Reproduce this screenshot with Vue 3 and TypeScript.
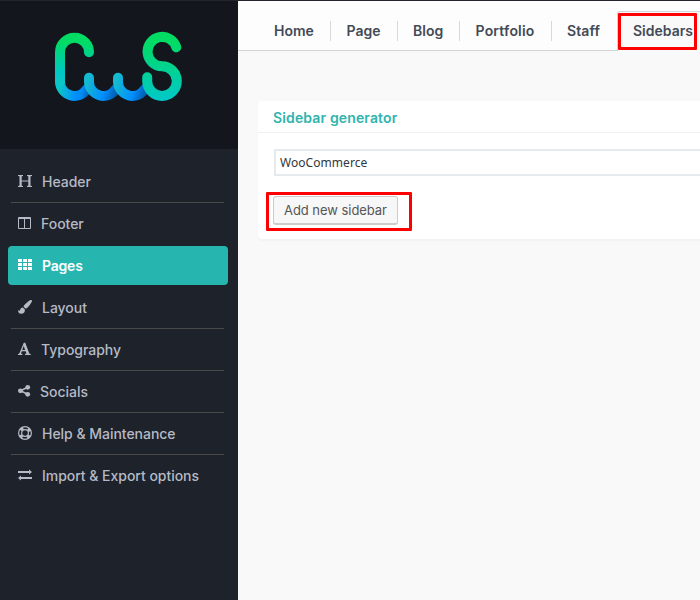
<script setup lang="ts">
interface MenuItem {
  id: string
  label: string
  active?: boolean
}

const menu: MenuItem[] = [
  { id: 'header', label: 'Header' },
  { id: 'footer', label: 'Footer' },
  { id: 'pages', label: 'Pages', active: true },
  { id: 'layout', label: 'Layout' },
  { id: 'typography', label: 'Typography' },
  { id: 'socials', label: 'Socials' },
  { id: 'help', label: 'Help & Maintenance' },
  { id: 'import', label: 'Import & Export options' },
]

const tabs: string[] = ['Home', 'Page', 'Blog', 'Portfolio', 'Staff', 'Sidebars']
const sidebarName: string = 'WooCommerce'
</script>

<template>
  <div class="screen">
    <aside class="side">
      <div class="brand">
        <svg class="logo" width="130" height="72" viewBox="54 31 130 72" fill="none" stroke-width="10" stroke-linecap="round">
          <defs>
            <linearGradient id="cBody" gradientUnits="userSpaceOnUse" x1="70" y1="42" x2="70" y2="82">
              <stop offset="0" stop-color="#00dc64" />
              <stop offset=".75" stop-color="#00c8c3" />
              <stop offset="1" stop-color="#0bc6c6" />
            </linearGradient>
            <linearGradient id="cTail" gradientUnits="userSpaceOnUse" x1="60" y1="84" x2="90" y2="90">
              <stop offset="0" stop-color="#0bc6c6" />
              <stop offset=".58" stop-color="#008fff" />
              <stop offset=".78" stop-color="#0088f0" />
              <stop offset="1" stop-color="#005dad" />
            </linearGradient>
            <linearGradient id="w1" gradientUnits="userSpaceOnUse" x1="88" y1="80" x2="118" y2="90">
              <stop offset="0" stop-color="#15b9d0" />
              <stop offset=".6" stop-color="#008fff" />
              <stop offset="1" stop-color="#005bad" />
            </linearGradient>
            <linearGradient id="w2" gradientUnits="userSpaceOnUse" x1="117" y1="80" x2="147" y2="90">
              <stop offset="0" stop-color="#15b9d0" />
              <stop offset=".6" stop-color="#008fff" />
              <stop offset="1" stop-color="#005bad" />
            </linearGradient>
            <linearGradient id="sBody" gradientUnits="userSpaceOnUse" x1="162" y1="42" x2="162" y2="99">
              <stop offset="0" stop-color="#00dc64" />
              <stop offset="1" stop-color="#00c8c6" />
            </linearGradient>
          </defs>
          <path d="M60 81.5A14.5 14.5 0 0 0 86.5 89.5" stroke="url(#cTail)" />
          <path d="M89 52.2A14.5 14.5 0 0 0 60 52.2V81.5" stroke="url(#cBody)" />
          <path d="M89 77.8V81.5A14.5 14.5 0 0 0 115.5 89.5" stroke="url(#w1)" />
          <path d="M118 77.8V81.5A14.5 14.5 0 0 0 144.5 89.5" stroke="url(#w2)" />
          <path d="M176.3 47.2A14.7 14.7 0 1 0 162 66.3A14.8 14.8 0 1 1 147.2 81.2V77.3" stroke="url(#sBody)" />
        </svg>
      </div>
      <nav class="menu">
        <div v-for="item in menu" :key="item.id" class="item" :class="[item.id, { active: item.active }]">
          <svg class="icon" width="16" height="16" viewBox="0 0 16 16" fill="currentColor">
            <path
              v-if="item.id === 'header'"
              d="M1 2h5v.9l-1.300.3v4.300h6.600V3.200L10 2.900V2h5v.9l-1.500.3v9.600l1.500.3v.9h-5v-.9l1.300-.3V8.500H4.700v4.300l1.300.3v.9H1v-.9l1.500-.3V3.200L1 2.900z"
            />
            <path
              v-else-if="item.id === 'footer'"
              fill-rule="evenodd"
              d="M2 2h11a1 1 0 0 1 1 1v10a1 1 0 0 1-1 1H2a1 1 0 0 1-1-1V3a1 1 0 0 1 1-1zM2 4v9h5V4zM8 4v9h5V4z"
            />
            <path
              v-else-if="item.id === 'pages'"
              d="M1 2h4v3H1zM6 2h4v3H6zM11 2h4v3h-4zM1 6h4v3H1zM6 6h4v3H6zM11 6h4v3h-4zM1 10h4v3H1zM6 10h4v3H6zM11 10h4v3h-4z"
            />
            <path
              v-else-if="item.id === 'layout'"
              d="M13.600 1.100c.9-.4 1.700.3 1.300 1.300-.7 1.800-3.300 5.300-4.900 6.600-.5.4-1 .6-1.600.5L6.600 7.700c0-.6.3-1.100.7-1.600C8.700 4.500 11.800 1.800 13.600 1.100zM5.900 8.400l2 2c.3 2.700-1.300 4.300-3.800 4.300C2 14.700 1 13 1 11.200c1 .7 1.800.8 2.200-.5.4-1.500 1.400-2.300 2.700-2.300z"
            />
            <path
              v-else-if="item.id === 'typography'"
              d="M6.800 1.800h1.500l4 10.700 1.400.5v1H8v-1l1.500-.4-.9-2.400H4.800l-.8 2.400 1.400.4v1H1v-1l1.300-.5zM6.700 5L5.200 9h2.900z"
            />
            <g v-else-if="item.id === 'socials'">
              <circle cx="3.400" cy="7.800" r="2.400" />
              <circle cx="10.700" cy="4.300" r="2.400" />
              <circle cx="10.700" cy="11.300" r="2.400" />
              <path d="M10.700 4.300L3.400 7.800l7.300 3.500" fill="none" stroke="currentColor" stroke-width="1.500" />
            </g>
            <g v-else-if="item.id === 'help'" fill="none" stroke="currentColor">
              <circle cx="8" cy="8" r="6.400" stroke-width="1.200" />
              <circle cx="8" cy="8" r="3.400" stroke-width="1.200" />
              <circle cx="8" cy="8" r="5" stroke-width="3.200" stroke-dasharray="3.200 4.654" stroke-dashoffset="-2.327" />
            </g>
            <path v-else d="M1 4h11V2.500L15 5l-3 2.500V6H1zM15 12H4v1.500L1 11l3-2.500V10h11z" />
          </svg>
          <span class="label">{{ item.label }}</span>
        </div>
      </nav>
    </aside>

    <main class="main">
      <nav class="tabs">
        <div v-for="tab in tabs" :key="tab" class="tab" :class="tab.toLowerCase()">
          <span>{{ tab }}</span>
          <i v-if="tab === 'Sidebars'" class="mark mark-tab"></i>
        </div>
      </nav>
      <section class="card">
        <h2>Sidebar generator</h2>
        <div class="body">
          <div class="field">{{ sidebarName }}</div>
          <div class="action">
            <button type="button">Add new sidebar</button>
            <i class="mark mark-button"></i>
          </div>
        </div>
      </section>
    </main>
  </div>
</template>

<style>
body {
  margin: 0;
  overflow: hidden;
}
</style>

<style scoped>
.screen {
  box-sizing: border-box;
  display: flex;
  width: 700px;
  height: 600px;
  overflow: hidden;
  border-top: 1px solid #22252c;
  background: #f9f9f9;
  font-family: Inter, 'Liberation Sans', sans-serif;
}
.side {
  flex: 0 0 238px;
  background: #1e222a;
}
.brand {
  box-sizing: border-box;
  height: 148px;
  padding: 30px 54px 0;
  background: #13161d;
}
.logo {
  display: block;
}
.menu {
  padding: 12px 10px 0 8px;
}
.item {
  box-sizing: border-box;
  display: flex;
  align-items: center;
  height: 42px;
  padding: 0 0 2px 9px;
  color: #b5bac6;
  font-size: 14px;
  font-weight: 500;
  letter-spacing: -0.03px;
  background: linear-gradient(#4a4a4b, #4a4a4b) 3px 100% / 213px 1px no-repeat;
}
.item.footer,
.item.import {
  background: none;
}
.item.active {
  height: 39px;
  margin: 1px 0 2px;
  padding-bottom: 0;
  border-radius: 4px;
  color: #fff;
  background: #27b5b0;
  font-weight: 600;
  letter-spacing: -0.2px;
}
.icon {
  flex: none;
  margin-right: 9px;
}
.active .icon {
  margin-bottom: 1px;
}
.label {
  white-space: nowrap;
}
.footer .label,
.typography .label {
  margin-left: -1px;
}
.socials .label {
  margin-left: -2px;
}
.main {
  flex: 1;
  min-width: 0;
  overflow: hidden;
}
.tabs {
  box-sizing: border-box;
  display: flex;
  width: 480px;
  height: 50px;
  padding: 10px 0 0 20px;
  border-bottom: 1px solid #d2d3d6;
  background: #fdfdfe;
}
.tab {
  box-sizing: border-box;
  position: relative;
  flex: none;
  height: 40px;
  padding-left: 16px;
  color: #434a56;
  font-size: 14px;
  font-weight: 600;
  line-height: 40px;
  background: linear-gradient(#d8d9dc, #d8d9dc) 100% 10px / 1px 20px no-repeat;
}
.home {
  width: 73px;
}
.page {
  width: 67px;
  padding-left: 15.5px;
}
.blog {
  width: 62px;
}
.portfolio {
  width: 92px;
  padding-left: 15.5px;
  letter-spacing: 0.2px;
}
.staff {
  width: 65px;
  background: none;
  letter-spacing: 0.1px;
}
.staff,
.blog {
  padding-left: 15px;
}
.sidebars {
  width: 100px;
  padding-left: 15px;
  border: 1px solid #d2d3d6;
  border-bottom: 0;
  border-radius: 3px 0 0 0;
  line-height: 38px;
  background: #f9f9f9;
}
.mark {
  box-sizing: border-box;
  position: absolute;
  border: 3px solid #f00;
  border-radius: 1px;
}
.mark-tab {
  top: 1px;
  left: 0;
  width: 79px;
  height: 37px;
}
.card {
  width: 480px;
  margin: 50px 0 0 20px;
  border-radius: 4px;
  background: #fff;
  box-shadow: 0 2px 1px #f3f3f3;
}
h2 {
  box-sizing: border-box;
  height: 32px;
  margin: 0;
  padding-left: 15px;
  border-bottom: 1px solid #eff1f2;
  color: #30b4ae;
  font-size: 14px;
  font-weight: 600;
  letter-spacing: 0.14px;
  line-height: 34px;
}
.body {
  box-sizing: border-box;
  height: 106px;
  padding: 16px 0 0 16px;
}
.field {
  box-sizing: border-box;
  width: 480px;
  height: 27px;
  padding-left: 4px;
  border: 2px solid #e5eaee;
  color: #32373c;
  font: 12px/23px 'Noto Sans', sans-serif;
  letter-spacing: 0.05px;
}
.action {
  position: relative;
  margin: 20px 0 0 -1px;
}
button {
  box-sizing: border-box;
  display: block;
  width: 125px;
  height: 29px;
  padding: 0;
  border: 1px solid #ccc;
  border-bottom-width: 2px;
  border-radius: 3px;
  color: #555;
  background: #f7f7f7;
  font: 13px/26px Inter, sans-serif;
  letter-spacing: -0.05px;
  white-space: nowrap;
}
.mark-button {
  top: -4px;
  left: -7px;
  width: 146px;
  height: 39px;
}
</style>
